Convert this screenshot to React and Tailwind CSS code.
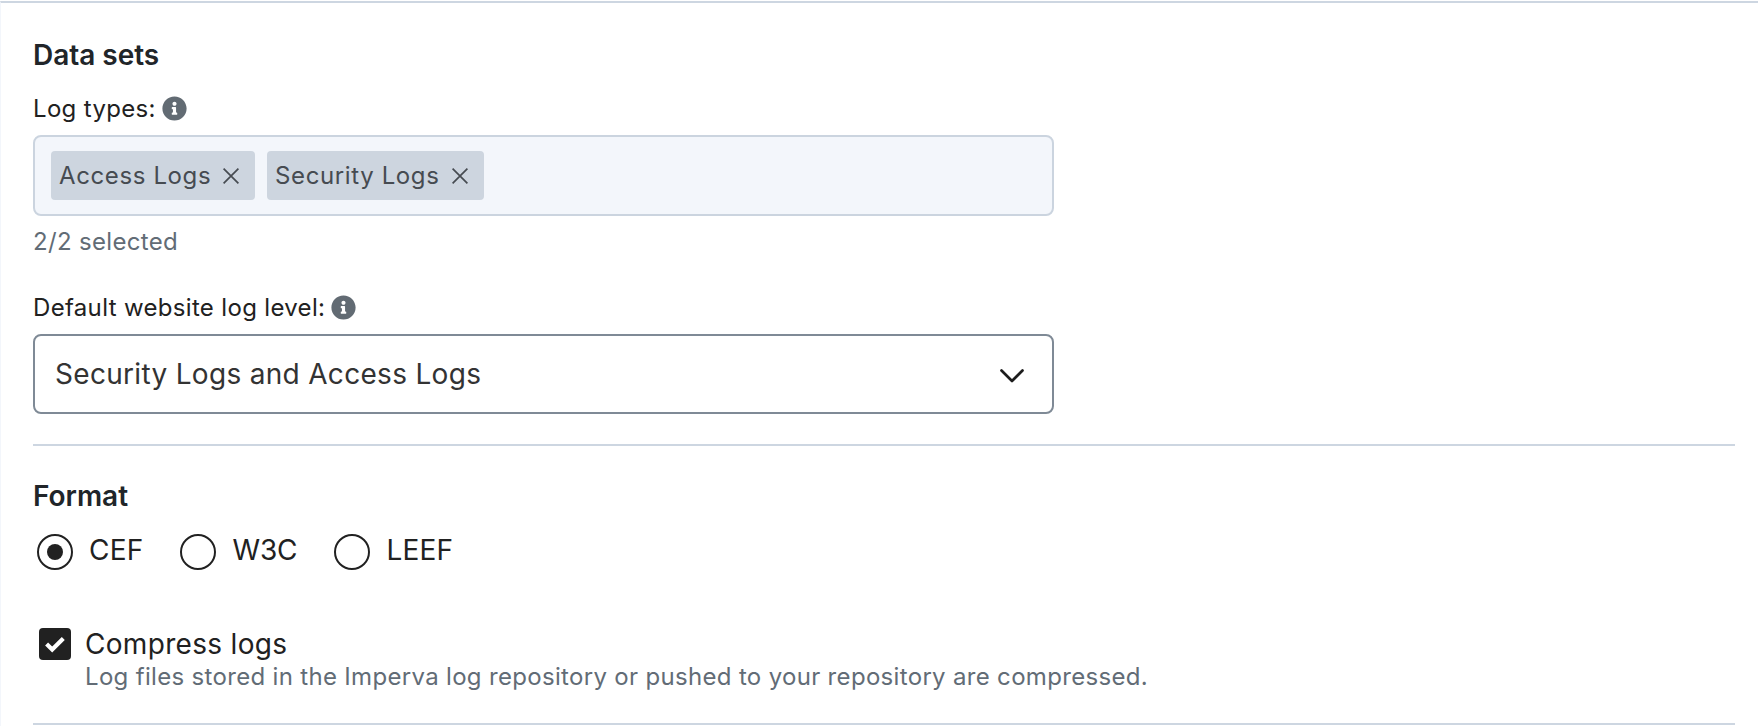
import React, { useState } from "react"
import { FaInfoCircle } from "react-icons/fa"

const formats = ["CEF", "W3C", "LEEF"]

const Heading = ({ children }) => (
  <h2 className="h-[34px] text-[28px] leading-[34px] font-semibold tracking-[-0.03px] text-[#212529]">
    {children}
  </h2>
)

const FieldLabel = ({ children }) => (
  <div className="flex h-[30px] items-center gap-1.5">
    <span className="pt-0.5 text-2xl leading-[30px] tracking-[0.33px] text-[#212121]">{children}</span>
    <FaInfoCircle className="size-[25px] text-[#626b73]" />
  </div>
)

const Chip = ({ label, width }) => (
  <div className={`${width} flex h-[49px] items-center justify-between rounded-[4px] bg-[#cdd5df] pr-4 pl-2`}>
    <span className="text-2xl leading-[30px] tracking-[0.62px] whitespace-nowrap text-[#464b51]">{label}</span>
    <svg viewBox="0 0 16 16" className="size-4 shrink-0 text-[#464b51]" fill="none" stroke="currentColor" strokeWidth="1.7">
      <path d="M0.6 0.6L15.4 15.4M15.4 0.6L0.6 15.4" />
    </svg>
  </div>
)

const Radio = ({ label, checked, onSelect, spacing }) => (
  <button type="button" role="radio" aria-checked={checked} onClick={onSelect} className="flex h-9 items-center gap-4">
    <span className="flex size-9 items-center justify-center rounded-full border-2 border-[#212121]">
      {checked && <span className="size-4 rounded-full bg-[#212121]" />}
    </span>
    <span className={`${spacing} pb-1 text-[28px] leading-[34px] text-[#212121]`}>{label}</span>
  </button>
)

const App = () => {
  const [format, setFormat] = useState("CEF")
  const [compress, setCompress] = useState(true)

  return (
    <div className="h-[726px] w-[1758px] overflow-hidden bg-white pt-px font-['Inter',sans-serif]">
      <div className="h-full border-t-2 border-l border-t-[#cdd6e1] border-l-[#f3f6fb] pt-[35px] pr-[23px] pl-8">
        <section>
          <Heading>Data sets</Heading>
          <div className="mt-[21px]">
            <FieldLabel>Log types:</FieldLabel>
          </div>
          <div className="mt-3 flex h-[81px] w-[1021px] gap-3 rounded-lg border-2 border-[#cbd4df] bg-[#f3f6fb] pt-3.5 pl-4">
            <Chip label="Access Logs" width="w-[204px]" />
            <Chip label="Security Logs" width="w-[217px]" />
          </div>
          <p className="mt-[11px] text-2xl leading-[30px] tracking-[0.33px] text-[#626c76]">2/2 selected</p>

          <div className="mt-[35px]">
            <FieldLabel>Default website log level:</FieldLabel>
          </div>
          <button
            type="button"
            className="mt-3 flex h-20 w-[1021px] items-center justify-between rounded-lg border-2 border-[#7f8a96] bg-white pr-7 pl-5"
          >
            <span className="text-[28px] leading-[34px] tracking-[0.31px] text-[#333333]">Security Logs and Access Logs</span>
            <svg viewBox="0 0 24 14" className="mt-[3px] h-3.5 w-6" fill="none" stroke="#1c1c1c" strokeWidth="2.7" strokeLinecap="round" strokeLinejoin="round">
              <path d="M1.5 1.5L12 12L22.5 1.5" />
            </svg>
          </button>
        </section>

        <section className="mt-[30px] border-t-2 border-[#cdd6e1] pt-[33px]">
          <Heading>Format</Heading>
          <div role="radiogroup" className="mt-[21px] flex gap-[37px] pl-1">
            {formats.map((item) => (
              <Radio
                key={item}
                label={item}
                checked={format === item}
                onSelect={() => setFormat(item)}
                spacing={item === "W3C" ? "tracking-[-0.1px]" : "tracking-[0.2px]"}
              />
            ))}
          </div>

          <button
            type="button"
            role="checkbox"
            aria-checked={compress}
            onClick={() => setCompress(!compress)}
            className="mt-[58px] flex h-8 items-center gap-3.5 pl-1.5"
          >
            <span className="flex size-8 items-center justify-center rounded-[4px] bg-[#212121]">
              {compress && (
                <svg viewBox="0 0 32 32" className="size-8" fill="none" stroke="#fff" strokeWidth="4.2">
                  <path d="M7.6 16L13.2 21.6L24.3 10.6" />
                </svg>
              )}
            </span>
            <span className="text-[28px] leading-8 tracking-[0.31px] text-[#212121]">Compress logs</span>
          </button>
          <p className="mt-0.5 pl-[52px] text-2xl leading-[30px] tracking-[0.32px] text-[#626c76]">
            Log files stored in the Imperva log repository or pushed to your repository are compressed.
          </p>
        </section>
        <div className="mt-[31px] h-0.5 bg-[#cdd6e1]" />
      </div>
    </div>
  )
}

export default App
